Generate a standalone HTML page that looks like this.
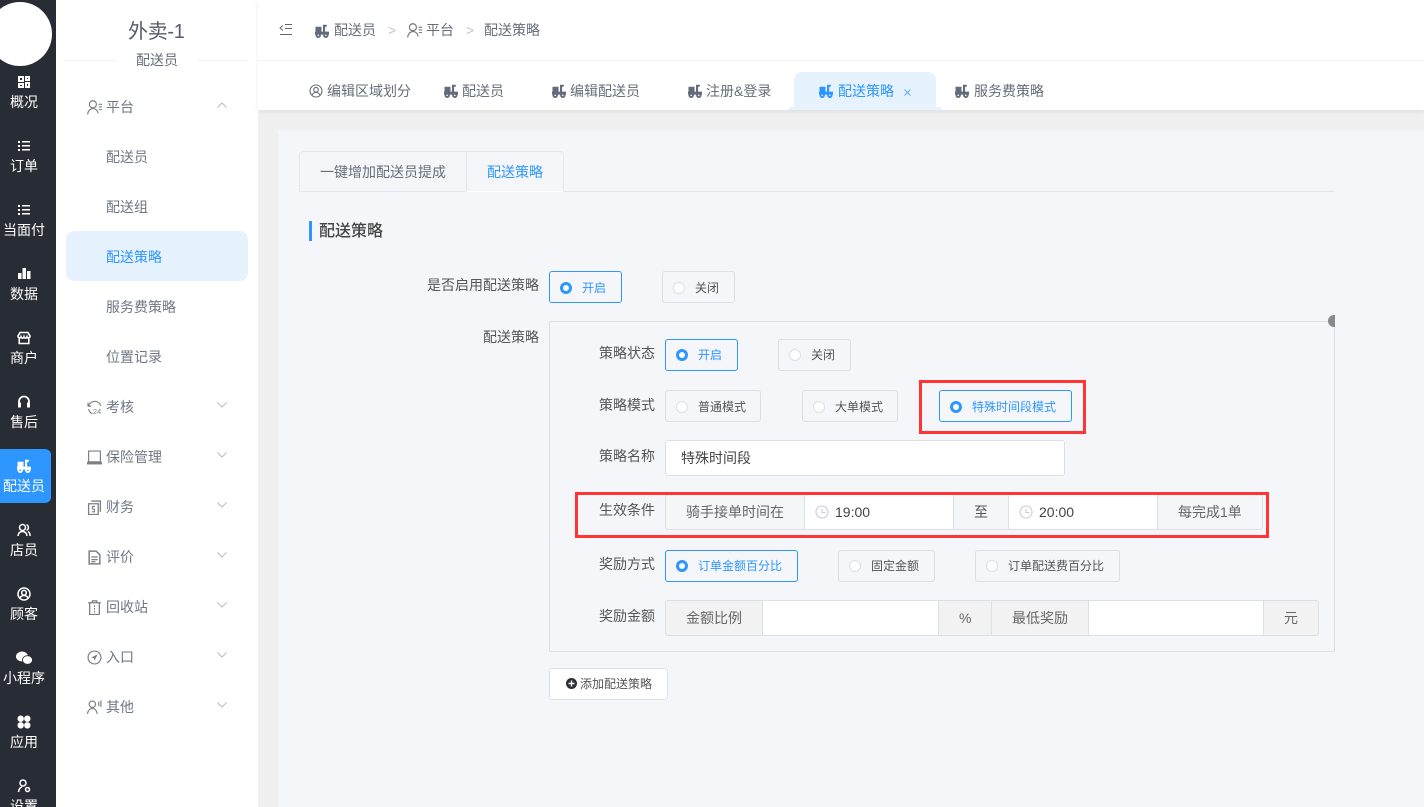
<!DOCTYPE html>
<html lang="zh"><head><meta charset="utf-8"><title>配送策略</title>
<style>
html,body{margin:0;padding:0;width:1424px;height:807px;overflow:hidden}
#p{left:0;top:0;width:1424px;height:807px;overflow:hidden;background:#f0f0f0;font-family:"Liberation Sans","Noto Sans CJK SC",sans-serif;font-size:14px;color:#555}
div,span,svg{position:absolute;box-sizing:border-box}
span{white-space:nowrap;height:20px;line-height:20px}
.r{width:48px;left:0;text-align:center;color:#fff}
.ri{left:17px;width:14px;height:14px;color:#fff}
.m{left:106px;color:#6f7785}
.si{left:87px;width:15px;height:15px;color:#7d7f85}
.ch{left:217px;width:10px;height:6px;color:#b9bbc0}
.b{color:#666e7a}
.blue{color:#2d96ff}
.tr{width:14px;height:14px;color:#626a7c}
.box{height:32px;border:1px solid #dcdfe6;border-radius:3px}
.on{border-color:#2d96ff}
.c{width:12px;height:12px;border-radius:50%;background:#fff;border:1px solid #dcdfe6}
.c.sel{background:#fff;border:3.5px solid #2d96ff}
.s{font-size:12px;color:#555}
.l{text-align:right;color:#555}
.red{border:3px solid #ff3535}
.ad{top:0;height:36px;border:1px solid #dcdfe6;background:#f5f6f8}
.in{top:0;height:36px;border:1px solid #dcdfe6;background:#fff}
</style></head><body>
<div id="p">
<svg width="0" height="0" style="left:0;top:0"><defs>
<symbol id="truck" viewBox="0 0 14 14"><path fill="currentColor" d="M.5 2.800h6V7.600h1.500V.8h3.800v1.900h-1.700v4.900H14v3H0V7.600h.5z"/><path fill="currentColor" fill-rule="evenodd" d="M3.200 8.600a2.700 2.700 0 1 0 .01 0zM3.200 10.500a.8.800 0 1 1-.01 0zM10.800 8.600a2.700 2.700 0 1 0 .01 0zM10.800 10.500a.8.800 0 1 1-.01 0z"/></symbol>
<symbol id="user" viewBox="0 0 14 14"><g fill="none" stroke="currentColor" stroke-width="1.100"><circle cx="5.500" cy="4" r="3.300"/><path d="M.6 13.500c.3-3.300 2.300-5.500 4.900-5.500s4.300 1.700 4.900 4.500"/><path d="M10.700 4H14M11 6.500h3M11 9h3" stroke-width="1"/></g></symbol>
<symbol id="list" viewBox="0 0 14 14"><path fill="currentColor" d="M1 2h2v2H1zM5 2h8v1.500H5zM1 6h2v2H1zM5 6h8v1.500H5zM1 10h2v2H1zM5 10h8v1.500H5z"/></symbol>
<symbol id="chev" viewBox="0 0 10 6"><path fill="none" stroke="currentColor" d="M.5.500 5 5 9.500.500"/></symbol>
<symbol id="chevu" viewBox="0 0 10 6"><path fill="none" stroke="currentColor" d="M.5 5.500 5 1l4.500 4.500"/></symbol>
<symbol id="clock" viewBox="0 0 14 14"><circle cx="7" cy="7" r="6" fill="none" stroke="#c8ccd4" stroke-width="1.100"/><path d="M7 3.500V7.500h3.500" fill="none" stroke="#c8ccd4" stroke-width="1.100"/></symbol>
</defs></svg>

<!-- rail -->
<div style="left:0;top:0;width:56px;height:807px;background:#282c35"></div>
<div style="left:-12px;top:2px;width:64px;height:64px;border-radius:50%;background:#fff"></div>
<div style="left:0;top:449px;width:51px;height:54px;background:#2d96ff;border-radius:0 6px 6px 0"></div>
<svg class="ri" style="top:75px" viewBox="0 0 14 14"><path fill="none" stroke="#fff" stroke-width="2" d="M2 2h4v4H2zM9 2h3v3H9zM2 9h4v3H2zM9 8h3v4H9z"/></svg>
<span class="r" style="top:92px">概况</span>
<svg class="ri" style="top:139px"><use href="#list"/></svg>
<span class="r" style="top:156px">订单</span>
<svg class="ri" style="top:203px"><use href="#list"/></svg>
<span class="r" style="top:220px">当面付</span>
<svg class="ri" style="top:266px" viewBox="0 0 14 14"><path fill="#fff" d="M1 7h3.500v6H1zM5.500 2H9v11H5.500zM10 5h3.500v8H10z"/></svg>
<span class="r" style="top:284px">数据</span>
<svg class="ri" style="top:331px" viewBox="0 0 14 14"><path fill="none" stroke="#fff" stroke-width="1.600" d="M3 1.500h8L13 5c0 2-2.500 2.500-3 .8-.6 1.700-2.500 1.700-3 0-.5 1.700-2.400 1.700-3 0C3.500 7.500 1 7 1 5zM2.200 7v5.500h9.600V7"/></svg>
<span class="r" style="top:348px">商户</span>
<svg class="ri" style="top:395px" viewBox="0 0 14 14"><path fill="none" stroke="#fff" stroke-width="1.800" d="M2 9V6.500a5 5 0 0 1 10 0V9"/><path fill="#fff" d="M1 7.500h3v5H1zM10 7.500h3v5h-3z"/></svg>
<span class="r" style="top:412px">售后</span>
<svg class="ri" style="top:459px"><use href="#truck"/></svg>
<span class="r" style="top:476px">配送员</span>
<svg class="ri" style="top:523px" viewBox="0 0 14 14"><g fill="none" stroke="#fff" stroke-width="1.500"><circle cx="5.500" cy="4.500" r="3"/><path d="M1 13c.3-3 2-4.500 4.500-4.500S9.700 10 10 13M9.500 1.700a3 3 0 0 1 0 5.600M11 8.500c1.300.7 2 2.200 2.200 4.500"/></g></svg>
<span class="r" style="top:540px">店员</span>
<svg class="ri" style="top:587px" viewBox="0 0 14 14"><g fill="none" stroke="#fff" stroke-width="1.500"><circle cx="7" cy="7" r="6"/><circle cx="7" cy="5.700" r="2.300"/><path d="M3 11c1-2 2.500-2.500 4-2.500S10 9 11 11"/></g></svg>
<span class="r" style="top:604px">顾客</span>
<svg class="ri" style="top:651px;left:16px;width:17px" viewBox="0 0 17 14"><ellipse cx="6" cy="5.500" rx="6" ry="5" fill="#fff"/><ellipse cx="11.500" cy="9" rx="5" ry="4.300" fill="#fff" stroke="#282c35" stroke-width=".8"/></svg>
<span class="r" style="top:668px">小程序</span>
<svg class="ri" style="top:715px" viewBox="0 0 14 14"><g fill="#fff"><circle cx="3.700" cy="3.700" r="3.200"/><circle cx="10.300" cy="3.700" r="3.200"/><circle cx="3.700" cy="10.300" r="3.200"/><circle cx="10.300" cy="10.300" r="3.200"/></g></svg>
<span class="r" style="top:732px">应用</span>
<svg class="ri" style="top:779px" viewBox="0 0 14 14"><g fill="none" stroke="#fff" stroke-width="1.500"><circle cx="6" cy="4" r="3"/><path d="M1.500 13c.3-2.500 1.500-4.500 3.500-5"/><circle cx="10.500" cy="10.500" r="2"/></g></svg>
<span class="r" style="top:796px">设置</span>

<!-- side menu -->
<div style="left:56px;top:0;width:202px;height:807px;background:#fff"></div>
<span style="left:128px;top:19px;height:26px;line-height:26px;font-size:20px;color:#555c68;letter-spacing:-.3px">外卖-1</span>
<div style="left:66px;top:60px;width:182px;height:1px;background:#f1f2f4"></div>
<div style="left:116px;top:56px;width:82px;height:10px;background:#fff"></div>
<span style="left:136px;top:50px;color:#666e7a">配送员</span>
<div style="left:66px;top:231px;width:182px;height:50px;background:#e6f3ff;border-radius:8px"></div>

<svg class="si" style="top:100px"><use href="#user"/></svg><span class="m" style="top:97px">平台</span>
<svg class="ch" style="top:102px"><use href="#chevu"/></svg>
<span class="m" style="top:147px">配送员</span>
<span class="m" style="top:197px">配送组</span>
<span class="m blue" style="top:247px;color:#2d96ff">配送策略</span>
<span class="m" style="top:297px">服务费策略</span>
<span class="m" style="top:347px">位置记录</span>

<svg class="si" style="top:400px" viewBox="0 0 14 14"><path fill="none" stroke="currentColor" stroke-width="1.100" d="M1.500 5.500A6 6 0 0 1 13 5.500M1 2.500v3.200h3M1.500 8.500C2 10.500 3 12 5 13"/><text x="5.500" y="13" font-size="7" font-family="Liberation Sans" fill="currentColor">24</text></svg>
<span class="m" style="top:397px">考核</span><svg class="ch" style="top:402px"><use href="#chev"/></svg>
<svg class="si" style="top:450px" viewBox="0 0 14 14"><path fill="none" stroke="currentColor" stroke-width="1.100" d="M1.500 1h11v10h-11z"/><path fill="currentColor" d="M0 11h14v2.500H0z"/></svg>
<span class="m" style="top:447px">保险管理</span><svg class="ch" style="top:452px"><use href="#chev"/></svg>
<svg class="si" style="top:500px" viewBox="0 0 14 14"><path fill="none" stroke="currentColor" stroke-width="1.200" d="M1.500 3.500h9v10h-9zM4 1h8.500v10"/><path fill="none" stroke="currentColor" d="M7.500 6H5v2.500h2V11H4.500"/></svg>
<span class="m" style="top:497px">财务</span><svg class="ch" style="top:502px"><use href="#chev"/></svg>
<svg class="si" style="top:550px" viewBox="0 0 14 14"><path fill="none" stroke="currentColor" stroke-width="1.400" d="M2 1h6.500L12 4.500V13H2z"/><path stroke="currentColor" stroke-width="1.200" d="M4 6.500h6M4 9h6M4 11h4"/></svg>
<span class="m" style="top:547px">评价</span><svg class="ch" style="top:552px"><use href="#chev"/></svg>
<svg class="si" style="top:600px" viewBox="0 0 14 14"><path fill="none" stroke="currentColor" stroke-width="1.200" d="M2.500 3v10.500h9V3M1 2.600h12M5 2.500V.8h4v1.700"/><path stroke="currentColor" d="M7 5v1.500M7 7.500V9M7 10v1.500"/></svg>
<span class="m" style="top:597px">回收站</span><svg class="ch" style="top:602px"><use href="#chev"/></svg>
<svg class="si" style="top:650px" viewBox="0 0 14 14"><circle cx="7" cy="7" r="6" fill="none" stroke="currentColor" stroke-width="1.100"/><path fill="currentColor" d="M10 4 4 7l2.500.7L7 10z"/></svg>
<span class="m" style="top:647px">入口</span><svg class="ch" style="top:652px"><use href="#chev"/></svg>
<svg class="si" style="top:700px" viewBox="0 0 14 14"><g fill="none" stroke="currentColor" stroke-width="1.100"><circle cx="5" cy="4" r="3"/><path d="M.5 13c.3-3 2-5 4.500-5s4 1.500 4.500 5M11 1.500v4M13 .5v6"/></g></svg>
<span class="m" style="top:697px">其他</span><svg class="ch" style="top:702px"><use href="#chev"/></svg>

<!-- top bar -->
<div style="left:258px;top:0;width:1166px;height:110px;background:#fff;box-shadow:0 2px 5px rgba(0,0,0,.07)"></div>
<div style="left:258px;top:60px;width:1166px;height:1px;background:#f1f2f4"></div>
<svg style="left:279px;top:24px;width:14px;height:12px" viewBox="0 0 14 12"><path fill="none" stroke="#666" d="M4 1.500 1 4l3 2.500M6 .5h7M6 4.500h7M1 10.500h12"/></svg>
<svg class="tr" style="left:315px;top:24px"><use href="#truck"/></svg>
<span class="b" style="left:334px;top:20px">配送员</span>
<span style="left:388px;top:20px;color:#c0c4cc">&gt;</span>
<svg class="tr" style="left:407px;top:23px;width:15px;height:15px;color:#777"><use href="#user"/></svg>
<span class="b" style="left:426px;top:20px">平台</span>
<span style="left:466px;top:20px;color:#c0c4cc">&gt;</span>
<span class="b" style="left:484px;top:20px">配送策略</span>

<svg style="left:309px;top:84px;width:14px;height:14px;color:#666e7a" viewBox="0 0 14 14"><g fill="none" stroke="currentColor" stroke-width="1.100"><circle cx="7" cy="7" r="6"/><circle cx="7" cy="5.700" r="2.300"/><path d="M3 11c1-2 2.500-2.500 4-2.500S10 9 11 11"/></g></svg>
<span class="b" style="left:327px;top:81px">编辑区域划分</span>
<svg class="tr" style="left:444px;top:84px"><use href="#truck"/></svg>
<span class="b" style="left:462px;top:81px">配送员</span>
<svg class="tr" style="left:552px;top:84px"><use href="#truck"/></svg>
<span class="b" style="left:570px;top:81px">编辑配送员</span>
<svg class="tr" style="left:688px;top:84px"><use href="#truck"/></svg>
<span class="b" style="left:706px;top:81px">注册&amp;登录</span>
<div style="left:794px;top:72px;width:142px;height:38px;background:#e6f3ff;border-radius:8px 8px 0 0"></div>
<div style="left:788px;top:107px;width:154px;height:3px;background:#e6f3ff;border-radius:4px 4px 0 0"></div>
<svg class="tr" style="left:819px;top:84px;color:#2d96ff"><use href="#truck"/></svg>
<span class="blue" style="left:838px;top:81px">配送策略</span>
<svg style="left:904px;top:89px;width:7px;height:7px" viewBox="0 0 7 7"><path stroke="#5aabff" d="M.5.500l6 6M6.500.500l-6 6"/></svg>
<svg class="tr" style="left:955px;top:84px"><use href="#truck"/></svg>
<span class="b" style="left:974px;top:81px">服务费策略</span>

<!-- panel -->
<div style="left:278px;top:130px;width:1146px;height:677px;background:#f5f6fa"></div>
<div style="left:299px;top:191px;width:1036px;height:1px;background:#e4e7ed"></div>
<div style="left:299px;top:151px;width:168px;height:41px;border:1px solid #e4e7ed;border-radius:4px 0 0 0"></div>
<div style="left:466px;top:151px;width:98px;height:41px;border:1px solid #e4e7ed;border-bottom:1px solid #fff;border-radius:0 4px 0 0"></div>
<span class="b" style="left:320px;top:162px">一键增加配送员提成</span>
<span class="blue" style="left:487px;top:162px">配送策略</span>
<div style="left:309px;top:221px;width:3px;height:20px;background:#2d96ff"></div>
<span style="left:319px;top:222px;font-size:16px;color:#444;font-weight:500">配送策略</span>

<span class="l" style="left:400px;width:139px;top:275px">是否启用配送策略</span>
<div class="box on" style="left:549px;top:271px;width:73px"></div>
<div class="c sel" style="left:560px;top:282px"></div>
<span class="s blue" style="left:582px;top:278px;color:#2d96ff">开启</span>
<div class="box" style="left:662px;top:271px;width:73px"></div>
<div class="c" style="left:673px;top:282px"></div>
<span class="s" style="left:695px;top:278px">关闭</span>

<span class="l" style="left:400px;width:139px;top:327px">配送策略</span>
<div style="left:549px;top:321px;width:786px;height:331px;border:1px solid #dcdfe6;border-radius:2px"></div>
<div style="left:1328px;top:315px;width:7px;height:12px;overflow:hidden"><div style="left:0;top:0;width:12px;height:12px;border-radius:50%;background:#8a8a8a"></div></div>

<span class="l" style="left:560px;width:95px;top:343px">策略状态</span>
<div class="box on" style="left:665px;top:339px;width:73px"></div>
<div class="c sel" style="left:676px;top:349px"></div>
<span class="s blue" style="left:698px;top:345px;color:#2d96ff">开启</span>
<div class="box" style="left:778px;top:339px;width:73px"></div>
<div class="c" style="left:789px;top:349px"></div>
<span class="s" style="left:811px;top:345px">关闭</span>

<span class="l" style="left:560px;width:95px;top:395px">策略模式</span>
<div class="box" style="left:665px;top:390px;width:96px"></div>
<div class="c" style="left:676px;top:401px"></div>
<span class="s" style="left:698px;top:397px">普通模式</span>
<div class="box" style="left:802px;top:390px;width:96px"></div>
<div class="c" style="left:813px;top:401px"></div>
<span class="s" style="left:835px;top:397px">大单模式</span>
<div class="box on" style="left:939px;top:390px;width:133px"></div>
<div class="c sel" style="left:950px;top:401px"></div>
<span class="s blue" style="left:972px;top:397px;color:#2d96ff">特殊时间段模式</span>
<div class="red" style="left:919px;top:380px;width:167px;height:54px"></div>

<span class="l" style="left:560px;width:95px;top:446px">策略名称</span>
<div style="left:665px;top:440px;width:400px;height:36px;background:#fff;border:1px solid #dcdfe6;border-radius:3px"></div>
<span style="left:681px;top:448px;color:#444">特殊时间段</span>

<span class="l" style="left:560px;width:95px;top:500px">生效条件</span>
<div style="left:665px;top:494px;width:598px;height:36px">
<div class="ad" style="left:0;width:140px;border-radius:3px 0 0 3px"></div>
<div class="in" style="left:139px;width:150px"></div>
<div class="ad" style="left:288px;width:56px"></div>
<div class="in" style="left:343px;width:150px"></div>
<div class="ad" style="left:492px;width:106px;border-radius:0 3px 3px 0"></div>
</div>
<span style="left:686px;top:502px;color:#666">骑手接单时间在</span>
<svg style="left:815px;top:505px;width:14px;height:14px"><use href="#clock"/></svg>
<span style="left:835px;top:502px;color:#444">19:00</span>
<span style="left:974px;top:502px;color:#555">至</span>
<svg style="left:1019px;top:505px;width:14px;height:14px"><use href="#clock"/></svg>
<span style="left:1039px;top:502px;color:#444">20:00</span>
<span style="left:1178px;top:502px;color:#666">每完成1单</span>
<div class="red" style="left:575px;top:492px;width:694px;height:46px;border-width:3px"></div>

<span class="l" style="left:560px;width:95px;top:554px">奖励方式</span>
<div class="box on" style="left:665px;top:550px;width:133px"></div>
<div class="c sel" style="left:676px;top:560px"></div>
<span class="s blue" style="left:698px;top:556px;color:#2d96ff">订单金额百分比</span>
<div class="box" style="left:838px;top:550px;width:97px"></div>
<div class="c" style="left:849px;top:560px"></div>
<span class="s" style="left:871px;top:556px">固定金额</span>
<div class="box" style="left:975px;top:550px;width:145px"></div>
<div class="c" style="left:986px;top:560px"></div>
<span class="s" style="left:1008px;top:556px">订单配送费百分比</span>

<span class="l" style="left:560px;width:95px;top:606px">奖励金额</span>
<div style="left:665px;top:600px;width:654px;height:36px">
<div class="ad" style="left:0;width:98px;background:#f2f2f2;border-radius:3px 0 0 3px"></div>
<div class="in" style="left:97px;width:177px"></div>
<div class="ad" style="left:273px;width:54px;background:#f2f2f2"></div>
<div class="ad" style="left:326px;width:98px;background:#f2f2f2"></div>
<div class="in" style="left:423px;width:176px"></div>
<div class="ad" style="left:598px;width:56px;background:#f2f2f2;border-radius:0 3px 3px 0"></div>
</div>
<span style="left:686px;top:608px;color:#666">金额比例</span>
<span style="left:959px;top:608px;color:#666">%</span>
<span style="left:1012px;top:608px;color:#666">最低奖励</span>
<span style="left:1284px;top:608px;color:#666">元</span>

<div class="box" style="left:549px;top:668px;width:119px;background:#fff"></div>
<svg style="left:566px;top:678px;width:11px;height:11px" viewBox="0 0 11 11"><circle cx="5.500" cy="5.500" r="5.500" fill="#2b2e35"/><path stroke="#fff" stroke-width="1.400" d="M2.500 5.500h6M5.500 2.500v6"/></svg>
<span class="s" style="left:580px;top:674px">添加配送策略</span>
</div>
</body></html>
